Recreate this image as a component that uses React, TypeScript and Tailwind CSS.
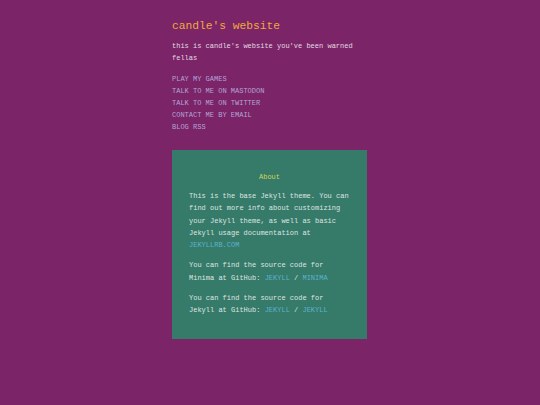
export default function App() {
  const links = [
    "PLAY MY GAMES",
    "TALK TO ME ON MASTODON",
    "TALK TO ME ON TWITTER",
    "CONTACT ME BY EMAIL",
    "BLOG RSS",
  ];

  return (
    <div
      className="min-h-[405px] w-full bg-[#7b2468]"
      style={{ fontFamily: '"Liberation Mono", "DejaVu Sans Mono", monospace' }}
    >
      <div className="ml-[172px] w-[195px] pt-[18px]">
        <h1 className="text-[11.25px] leading-[16px] text-[#f2a93a]">
          candle's website
        </h1>
        <p className="mt-[6px] text-[7px] leading-[12px] text-[#e4dae2]">
          this is candle's website you've been warned fellas
        </p>
        <ul className="mt-[9px] flex flex-col text-[7px] leading-[12px] text-[#b3a3d6]">
          {links.map((l) => (
            <li key={l}>
              <a href="#">{l}</a>
            </li>
          ))}
        </ul>

        <div className="mt-[17px] h-[189px] bg-[#367a69] px-[17px] pt-[21px] text-[7px] leading-[12.3px] text-[#dde6e1]">
          <h2 className="text-center text-[7px] leading-[12px] text-[#cbd65a]">
            About
          </h2>
          <p className="mt-[7px]">
            This is the base Jekyll theme. You can find out more info about
            customizing your Jekyll theme, as well as basic Jekyll usage
            documentation at{" "}
            <a href="#" className="text-[#5ab3cf]">
              JEKYLLRB.COM
            </a>
          </p>
          <p className="mt-[8px]">
            You can find the source code for Minima at GitHub:{" "}
            <a href="#" className="text-[#5ab3cf]">JEKYLL</a>
            {" / "}
            <a href="#" className="text-[#5ab3cf]">MINIMA</a>
          </p>
          <p className="mt-[8px]">
            You can find the source code for Jekyll at GitHub:{" "}
            <a href="#" className="text-[#5ab3cf]">JEKYLL</a>
            {" / "}
            <a href="#" className="text-[#5ab3cf]">JEKYLL</a>
          </p>
        </div>
      </div>
    </div>
  );
}
